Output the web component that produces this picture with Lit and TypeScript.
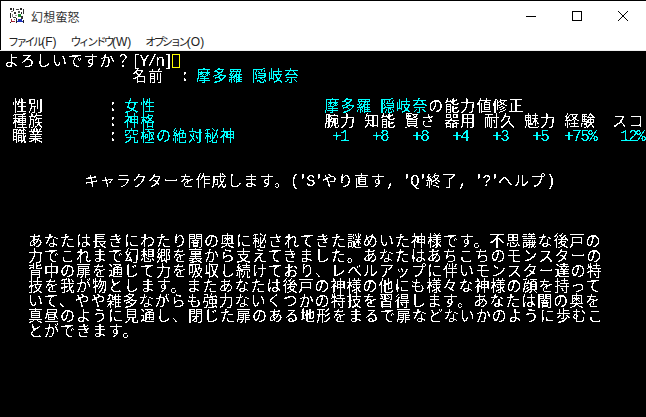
import { LitElement, html, css, svg } from "lit";
import { customElement } from "lit/decorators.js";

type Seg = [string, string?];
const C = "cy";

const rows: Seg[][] = [
  [["よろしいですか？[Y/n]"]],
  [["                名前  : "], ["摩多羅 隠岐奈", C]],
  [],
  [[" 性別        : "], ["女性", C], ["                     "], ["摩多羅 隠岐奈", C], ["の能力値修正"]],
  [[" 種族        : "], ["神格", C], ["                     "], ["腕力 知能 賢さ 器用 耐久 魅力 経験  スコ"]],
  [[" 職業        : "], ["究極の絶対秘神", C], ["           "], [" +1   +8   +8   +4   +3   +5  +75%   12%", C]],
  [],
  [],
  [["          キャラクターを作成します。('S'やり直す, 'Q'終了, '?'ヘルプ)"]],
  [],
  [],
  [],
  [["   あなたは長きにわたり闇の奥に秘されてきた謎めいた神様です。不思議な後戸の"]],
  [["   力でこれまで幻想郷を裏から支えてきました。あなたはあちこちのモンスターの"]],
  [["   背中の扉を通じて力を吸収し続けており、レベルアップに伴いモンスター達の特"]],
  [["   技を我が物とします。またあなたは後戸の神様の他にも様々な神様の顔を持って"]],
  [["   いて、やや雑多ながらも強力ないくつかの特技を習得します。あなたは闇の奥を"]],
  [["   真昼のように見通し、閉じた扉のある地形をまるで扉などないかのように歩むこ"]],
  [["   とができます。"]],
];

const runs = (s: string) => s.match(/[\x20-\x7e]+|[^\x20-\x7e]+/g) ?? [];

@customElement("app-root")
export class AppRoot extends LitElement {
  static styles = css`
    :host { display: block; width: 646px; height: 417px; overflow: hidden; background: #000; }
    .win { display: flex; flex-direction: column; height: 417px; }
    .title { height: 30px; flex: none; background: #fff; border-top: 1px solid #000; border-left: 1px solid #000; display: flex; align-items: center; }
    .ico { width: 16px; height: 16px; margin-left: 8px; flex: none; shape-rendering: crispEdges; }
    .name { margin-left: 6px; font: 12px "Noto Sans CJK JP", sans-serif; color: #333; flex: 1; letter-spacing: 0.2px; }
    .btn { width: 46px; height: 30px; display: flex; align-items: center; justify-content: center; flex: none; }
    .btn svg { width: 10px; height: 10px; shape-rendering: crispEdges; }
    .btn svg.x { shape-rendering: auto; }
    .menu { height: 19px; flex: none; background: #fff; border-left: 1px solid #000; display: flex; align-items: center; gap: 14px; padding-left: 7px; font: 12px "Noto Sans CJK JP", sans-serif; color: #222; }
    .menu .kana { font-size: 11px; letter-spacing: -2.7px; }
    .menu .lat { font-family: "Liberation Sans", sans-serif; }
    .line { height: 1px; flex: none; background: #f0f0f0; }
    .term { flex: 1; background: #000; padding: 1px 0 0 4px; color: #fff; filter: url(#bits); overflow: hidden; }
    .row { height: 15px; line-height: 15px; white-space: pre; font-family: "Noto Sans CJK JP", sans-serif; font-size: 15px; }
    .k { letter-spacing: 1px; }
    .a { font-family: "Liberation Mono", monospace; font-size: 16px; letter-spacing: -1.6px; }
    .cy { color: #0ff; }
    .cursor { display: inline-block; width: 8px; height: 14px; box-sizing: border-box; border: 1px solid #ff0; vertical-align: -2px; }
    .defs { position: absolute; width: 0; height: 0; }
  `;

  seg(s: Seg) {
    return runs(s[0]).map(
      (r) => html`<span class="${/^[\x20-\x7e]/.test(r) ? "a" : "k"} ${s[1] ?? ""}">${r}</span>`
    );
  }

  icon() {
    const px: [number, number, number, number, string][] = [
      [1, 0, 2, 2, "#222"], [4, 0, 1, 3, "#222"], [7, 1, 3, 1, "#444"], [11, 0, 2, 2, "#222"], [14, 1, 1, 5, "#333"],
      [2, 3, 2, 1, "#777"], [5, 4, 2, 2, "#333"], [9, 3, 2, 2, "#555"], [12, 4, 1, 2, "#222"],
      [1, 5, 1, 5, "#222"], [3, 6, 1, 3, "#888"], [6, 7, 2, 1, "#999"],
      [9, 6, 3, 3, "#1a8a2a"], [12, 8, 2, 3, "#333"], [4, 9, 3, 1, "#444"], [2, 11, 1, 3, "#a02030"], [3, 13, 3, 1, "#a02030"],
      [7, 10, 1, 5, "#222"], [5, 11, 1, 1, "#777"], [9, 11, 4, 2, "#1c2fb8"], [8, 13, 6, 1, "#1c2fb8"], [1, 14, 1, 1, "#222"], [14, 12, 1, 3, "#222"],
    ];
    return html`<svg class="ico" viewBox="0 0 16 16">${px.map(
      ([x, y, w, h, f]) => svg`<rect x=${x} y=${y} width=${w} height=${h} fill=${f}></rect>`
    )}</svg>`;
  }

  menuItem(k: string, l: string) {
    return html`<span><span class="kana">${k}</span><span class="lat">${l}</span></span>`;
  }

  render() {
    return html`
      <svg class="defs"><filter id="bits" color-interpolation-filters="sRGB" x="0" y="0" width="1" height="1">
        <feComponentTransfer>
          <feFuncR type="discrete" tableValues="0 1"></feFuncR>
          <feFuncG type="discrete" tableValues="0 1"></feFuncG>
          <feFuncB type="discrete" tableValues="0 1"></feFuncB>
        </feComponentTransfer>
      </filter></svg>
      <div class="win">
        <div class="title">
          ${this.icon()}
          <span class="name">幻想蛮怒</span>
          <div class="btn"><svg viewBox="0 0 10 10"><rect x="0" y="5" width="10" height="1" fill="#000"></rect></svg></div>
          <div class="btn"><svg viewBox="0 0 10 10"><rect x="0.5" y="0.5" width="9" height="9" fill="none" stroke="#000"></rect></svg></div>
          <div class="btn"><svg class="x" viewBox="0 0 10 10"><path d="M0 0L10 10M10 0L0 10" stroke="#000" stroke-width="1" fill="none"></path></svg></div>
        </div>
        <div class="menu">${this.menuItem("ファイル", "(F)")}${this.menuItem("ウィンドウ", "(W)")}${this.menuItem("オプション", "(O)")}</div>
        <div class="line"></div>
        <div class="term">
          ${rows.map(
            (r, i) => html`<div class="row">${r.map((s) => this.seg(s))}${i === 0 ? html`<span class="cursor"></span>` : ""}</div>`
          )}
        </div>
      </div>
    `;
  }
}
